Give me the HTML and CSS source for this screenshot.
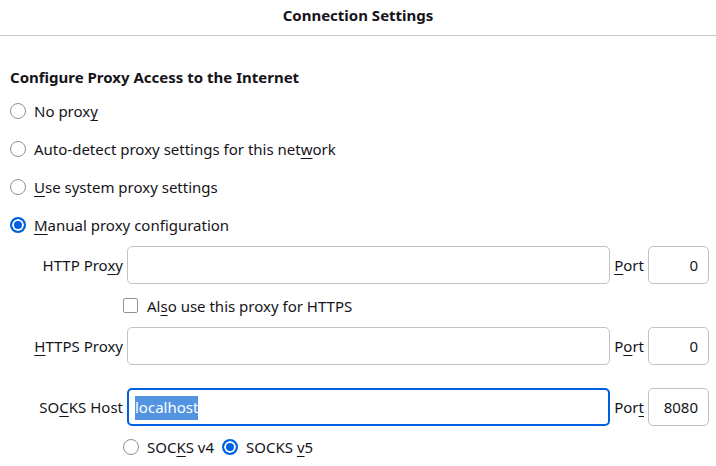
FILE: index.html
```html
<!DOCTYPE html>
<html>
<head>
<meta charset="utf-8">
<link rel="stylesheet" href="styles.css">
</head>
<body>
<div class="dialog">
  <header class="titlebar">Connection Settings</header>
  <main class="content">
    <h2 class="section-title">Configure Proxy Access to the Internet</h2>
    <div class="radio-row"><span class="radio"></span><span class="label">No prox<u>y</u></span></div>
    <div class="radio-row"><span class="radio"></span><span class="label">Auto-detect proxy settings for this net<u>w</u>ork</span></div>
    <div class="radio-row"><span class="radio"></span><span class="label"><u>U</u>se system proxy settings</span></div>
    <div class="radio-row"><span class="radio checked"></span><span class="label"><u>M</u>anual proxy configuration</span></div>

    <div class="proxy-grid">
      <span class="field-label">HTTP Pro<u>x</u>y</span>
      <div class="input"></div>
      <span class="port-label"><u>P</u>ort</span>
      <div class="input port">0</div>

      <div class="check-row">
        <span class="checkbox"></span><span class="label">Al<u>s</u>o use this proxy for HTTPS</span>
      </div>

      <span class="field-label"><u>H</u>TTPS Proxy</span>
      <div class="input"></div>
      <span class="port-label">P<u>o</u>rt</span>
      <div class="input port">0</div>

      <span class="field-label socks">SO<u>C</u>KS Host</span>
      <div class="input focused socks"><span class="selected">localhost</span></div>
      <span class="port-label socks">Por<u>t</u></span>
      <div class="input port socks">8080</div>

      <div class="socks-row">
        <span class="radio"></span><span class="label">SOC<u>K</u>S v4</span>
        <span class="radio checked"></span><span class="label"><span>SOCKS </span><u>v</u>5</span>
      </div>
    </div>
  </main>
</div>
</body>
</html>
```

FILE: styles.css
```css
* { box-sizing: border-box; }
html, body {
  margin: 0;
  padding: 0;
  background: #ffffff;
}
body {
  font-family: "Noto Sans", "Open Sans", sans-serif;
  font-size: 15px;
  color: #15141a;
  width: 716px;
  height: 466px;
  overflow: hidden;
}
u {
  text-decoration: underline;
  text-underline-offset: 3px;
  text-decoration-thickness: 1px;
}
.titlebar {
  height: 36px;
  border-bottom: 1px solid #c8c8cc;
  text-align: center;
  font-weight: 700;
  line-height: 31px;
  font-size: 15px;
}
.content {
  padding: 31px 0 0 10px;
}
.section-title {
  margin: 0;
  font-size: 15px;
  font-weight: 700;
  line-height: 21px;
  margin-bottom: 4px;
}
.radio-row {
  display: flex;
  align-items: center;
  height: 38px;
}
.radio {
  width: 16px;
  height: 16px;
  border: 1px solid #8f8f9d;
  border-radius: 50%;
  flex: none;
  background: #fff;
}
.radio.checked {
  border: 2px solid #0061e0;
  background: #0061e0;
  box-shadow: inset 0 0 0 2px #fff;
}
.radio-row .label {
  margin-left: 8px;
  line-height: 20px;
}
.proxy-grid {
  display: grid;
  grid-template-columns: 89px 1fr auto 61px;
  column-gap: 4px;
  margin-left: 24px;
  margin-right: 7px;
  margin-top: 2px;
  align-items: center;
}
.field-label {
  text-align: right;
  line-height: 20px;
  white-space: nowrap;
}
.port-label {
  line-height: 20px;
}
.input {
  height: 38px;
  border: 1px solid #c2c2c9;
  border-radius: 5px;
  background: #fff;
  padding: 0 10px;
  line-height: 36px;
}
.input.port {
  text-align: right;
}
.input.focused {
  border: 2px solid #0061e0;
  padding: 0 6px;
  line-height: 34px;
}
.selected {
  background: #5294e2;
  color: #fff;
  padding: 1px 0 3px;
}
.check-row {
  grid-column: 1 / -1;
  display: flex;
  align-items: center;
  height: 43px;
  padding-left: 89px;
}
.checkbox {
  width: 15px;
  height: 15px;
  border: 1px solid #8f8f9d;
  border-radius: 2px;
  background: #fff;
  flex: none;
}
.check-row .label {
  margin-left: 9px;
  line-height: 20px;
}
.socks {
  margin-top: 23px;
}
.socks-row {
  grid-column: 1 / -1;
  display: flex;
  align-items: center;
  height: 42px;
  padding-left: 89px;
}
.socks-row .label {
  margin-left: 8px;
  margin-right: 8px;
  line-height: 20px;
}
```
